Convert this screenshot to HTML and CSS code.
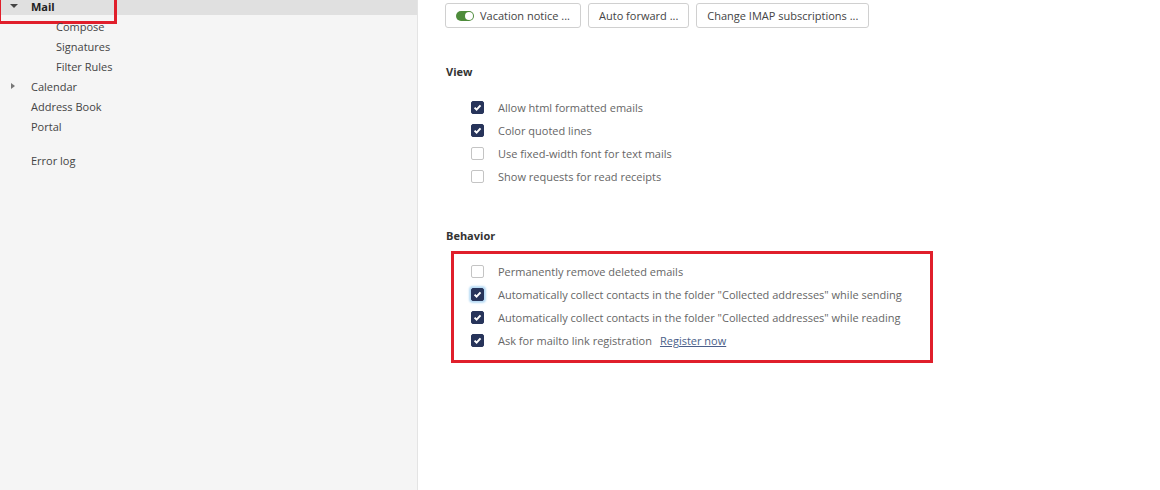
FILE: index.html
```html
<!DOCTYPE html>
<html lang="en">
    <head>
        <meta charset="UTF-8" />
        <meta name="viewport" content="width=device-width, initial-scale=1.0" />
        <title>Mail settings</title>
        <link rel="stylesheet" href="styles.css">
    </head>
    <body>
        <div class="app">
            <nav class="sidebar">
                <ul class="tree">
                    <li class="node open selected marked">
                        <span class="caret down"></span><span class="label">Mail</span>
                    </li>
                    <li class="node child"><span class="label">Compose</span></li>
                    <li class="node child"><span class="label">Signatures</span></li>
                    <li class="node child"><span class="label">Filter Rules</span></li>
                    <li class="node"><span class="caret right"></span><span class="label">Calendar</span></li>
                    <li class="node"><span class="label">Address Book</span></li>
                    <li class="node"><span class="label">Portal</span></li>
                    <li class="node gap"><span class="label">Error log</span></li>
                </ul>
            </nav>

            <main class="content">
                <div class="toolbar">
                    <button class="btn">
                        <span class="toggle"></span>Vacation notice ...
                    </button>
                    <button class="btn">Auto forward ...</button>
                    <button class="btn">Change IMAP subscriptions ...</button>
                </div>

                <section class="group">
                    <h3>View</h3>
                    <ul class="options">
                        <li><span class="check on"></span>Allow html formatted emails</li>
                        <li><span class="check on"></span>Color quoted lines</li>
                        <li><span class="check"></span>Use fixed-width font for text mails</li>
                        <li><span class="check"></span>Show requests for read receipts</li>
                    </ul>
                </section>

                <section class="group">
                    <h3>Behavior</h3>
                    <ul class="options marked-box">
                        <li><span class="check"></span>Permanently remove deleted emails</li>
                        <li><span class="check on focus"></span>Automatically collect contacts in the folder "Collected addresses" while sending</li>
                        <li><span class="check on"></span>Automatically collect contacts in the folder "Collected addresses" while reading</li>
                        <li><span class="check on"></span>Ask for mailto link registration <a href="#" class="link">Register now</a></li>
                    </ul>
                </section>
            </main>
        </div>
    </body>
</html>
```

FILE: styles.css
```css
body {
  margin: 0;
  font-family: "Open Sans", "Noto Sans", sans-serif;
  font-size: 11px;
  color: #555;
  background: #fff;
  overflow: hidden;
}

.app {
  display: flex;
  height: 490px;
}

/* left tree */
.sidebar {
  width: 417px;
  flex: none;
  background: #f5f5f5;
  border-right: 1px solid #e4e4e4;
}

.tree {
  list-style: none;
  margin: 0;
  padding: 0;
}

.node {
  position: relative;
  display: flex;
  align-items: center;
  height: 20px;
  padding-left: 31px;
  color: #444;
}

.node.child {
  padding-left: 56px;
}

.node.gap {
  margin-top: 14px;
}

.node.selected {
  height: 15px;
  margin-bottom: 1px;
  background: #e0e0e0;
  font-weight: bold;
  color: #222;
}

.node.selected .label {
  margin-top: -3px;
}

/* red annotation frame around the selected node */
.marked::after {
  content: "";
  position: absolute;
  left: -2px;
  top: -10px;
  width: 113px;
  height: 28px;
  border: 3px solid #e01f2b;
}

.caret {
  position: absolute;
  left: 10px;
  width: 0;
  height: 0;
}

.caret.down {
  top: 4px;
  border-left: 4px solid transparent;
  border-right: 4px solid transparent;
  border-top: 4px solid #444;
}

.caret.right {
  left: 11px;
  top: 7px;
  border-top: 3.5px solid transparent;
  border-bottom: 3.5px solid transparent;
  border-left: 4px solid #777;
}

/* right pane */
.content {
  flex: 1;
  padding: 3px 0 0 27px;
}

.toolbar {
  display: flex;
  gap: 7px;
}

.btn {
  display: flex;
  align-items: center;
  gap: 6px;
  height: 25px;
  padding: 0 10px;
  border: 1px solid #d0d0d0;
  border-radius: 3px;
  background: #fff;
  font-family: inherit;
  font-size: 11px;
  color: #444;
}

.toggle {
  position: relative;
  width: 18px;
  height: 10px;
  border-radius: 5px;
  background: #4e8c3b;
}

.toggle::after {
  content: "";
  position: absolute;
  right: 1px;
  top: 1px;
  width: 8px;
  height: 8px;
  border-radius: 50%;
  background: #fff;
}

.group h3 {
  margin: 0 0 0 1px;
  font-size: 11px;
  font-weight: bold;
  color: #333;
  line-height: 16px;
}

.group:first-of-type {
  margin-top: 36px;
}

.group + .group {
  margin-top: 40px;
}

.options {
  list-style: none;
  margin: 16px 0 0;
  padding: 0 0 0 26px;
  color: #666;
}

.options li {
  display: flex;
  align-items: center;
  height: 23px;
}

.check {
  width: 11px;
  height: 11px;
  margin-right: 14px;
  border: 1px solid #c4c4c4;
  border-radius: 2px;
  background: #fff;
  flex: none;
}

.check.on {
  border-color: #27345a;
  background: #27345a url("data:image/svg+xml,%3Csvg xmlns='http://www.w3.org/2000/svg' viewBox='0 0 12 12'%3E%3Cpath d='M2.8 6.1l2.2 2.2 4.3-4.6' fill='none' stroke='%23fff' stroke-width='2.2'/%3E%3C/svg%3E") center/11px no-repeat;
}

.check.focus {
  box-shadow: 0 0 2px 2px #b9dcf5;
}

.link {
  margin-left: 8px;
  color: #4b5f8a;
  text-decoration: underline;
}

.marked-box {
  width: 459px;
  margin: 7px 0 0 6px;
  padding: 6px 0 8px 17px;
  border: 3px solid #e01f2b;
}
```
